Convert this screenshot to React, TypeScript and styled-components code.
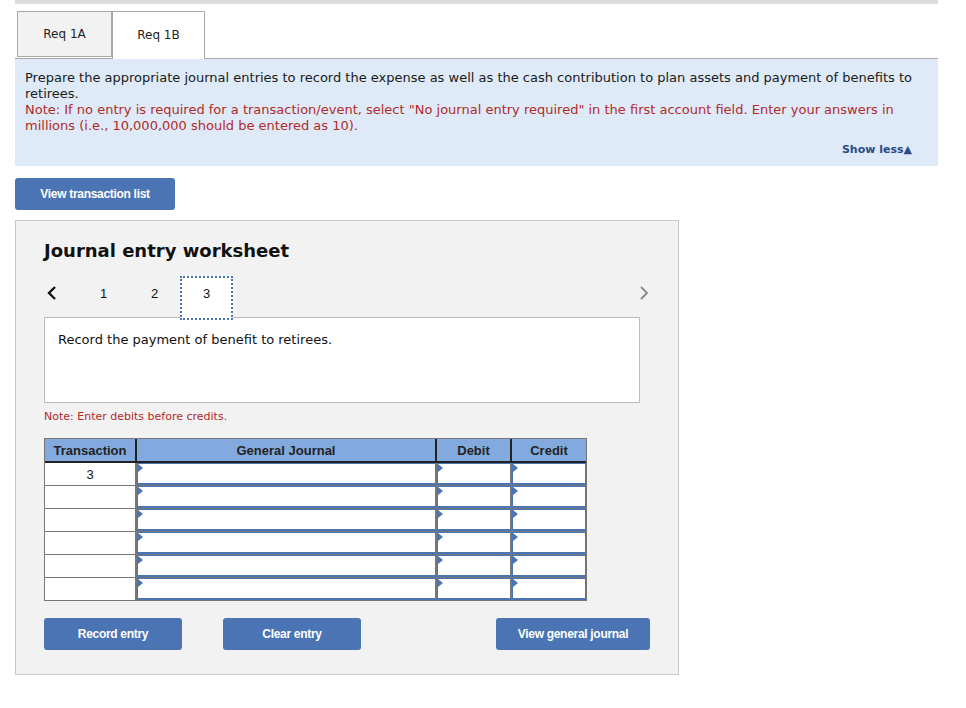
import React from 'react'
import styled, { createGlobalStyle } from 'styled-components'

const GlobalStyle = createGlobalStyle`
  body {
    margin: 0;
    background: #fff;
    font-family: Verdana, "DejaVu Sans", sans-serif;
    color: #111;
  }
`

const Page = styled.div`
  width: 923px;
  padding: 0 0 0 15px;
`

const TopBar = styled.div`
  height: 4px;
  background: #dcdcdc;
`

const Tabs = styled.div`
  display: flex;
  margin-top: 7px;
  padding-left: 2px;
  border-bottom: 1px solid #a8a8a8;
  height: 47px;
`

const Tab = styled.div<{ $active?: boolean }>`
  width: ${(p) => (p.$active ? 93 : 95)}px;
  height: ${(p) => (p.$active ? 48 : 46)}px;
  box-sizing: border-box;
  border: 1px solid #a8a8a8;
  border-bottom: ${(p) => (p.$active ? 'none' : '1px solid #a8a8a8')};
  background: ${(p) => (p.$active ? '#fff' : '#f2f2f2')};
  display: flex;
  align-items: center;
  justify-content: center;
  font-size: 12px;
  color: #222;
  padding-bottom: 1px;
`

const Instructions = styled.div`
  background: #deeaf7;
  padding: 11px 10px 8px 10px;
  font-size: 13px;
  line-height: 16px;
`

const Plain = styled.div`
  color: #1a1a1a;
`

const Note = styled.div`
  color: #b22a2a;
`

const ShowLess = styled.div`
  text-align: right;
  margin-top: 8px;
  padding-right: 16px;
  font-size: 11px;
  font-weight: bold;
  color: #2a4b85;
`

const Button = styled.button<{ $w: number }>`
  width: ${(p) => p.$w}px;
  height: 32px;
  border: none;
  border-radius: 3px;
  background: #4a74b4;
  color: #fff;
  font-family: "Liberation Sans", Arial, sans-serif;
  font-weight: bold;
  font-size: 12px;
  letter-spacing: -0.3px;
  padding: 0;
`

const TopAction = styled.div`
  margin-top: 12px;
`

const Worksheet = styled.div`
  margin-top: 10px;
  width: 664px;
  box-sizing: border-box;
  background: #f2f2f2;
  border: 1px solid #c8c8c8;
  padding: 18px 0 24px 28px;
`

const Title = styled.h2`
  margin: 0;
  font-size: 18px;
  font-weight: bold;
  color: #111;
  line-height: 24px;
`

const Nav = styled.div`
  display: flex;
  align-items: flex-start;
  height: 44px;
  margin-top: 13px;
  width: 608px;
`

const Arrow = styled.div<{ $muted?: boolean }>`
  width: 16px;
  height: 34px;
  display: flex;
  align-items: center;
  justify-content: center;
  color: ${(p) => (p.$muted ? '#888' : '#111')};
`

const Steps = styled.div`
  display: flex;
  margin-left: 18px;
`

const Step = styled.div<{ $current?: boolean }>`
  width: ${(p) => (p.$current ? 53 : 51)}px;
  height: 44px;
  box-sizing: border-box;
  display: flex;
  justify-content: center;
  padding-top: ${(p) => (p.$current ? 8 : 10)}px;
  font-size: 13px;
  font-family: "Liberation Sans", Arial, sans-serif;
  color: #111;
  background: ${(p) => (p.$current ? '#fff' : 'transparent')};
  border: ${(p) => (p.$current ? '2px dotted #4a74b4' : 'none')};
`

const Spacer = styled.div`
  flex: 1;
`

const Prompt = styled.div`
  margin-top: -3px;
  width: 596px;
  height: 86px;
  box-sizing: border-box;
  background: #fff;
  border: 1px solid #bbb;
  padding: 14px 13px;
  font-size: 13px;
  line-height: 16px;
`

const SmallNote = styled.div`
  margin-top: 7px;
  font-size: 11px;
  color: #b22a2a;
`

const Table = styled.div`
  margin-top: 15px;
  width: 543px;
  box-sizing: border-box;
  border: 1px solid #777;
  font-family: "Liberation Sans", Arial, sans-serif;
`

const HeadRow = styled.div`
  display: grid;
  grid-template-columns: 92px 300px 75px 1fr;
  height: 22px;
  background: #82aade;
  border-bottom: 2px solid #222;
`

const HeadCell = styled.div<{ $last?: boolean }>`
  display: flex;
  align-items: center;
  justify-content: center;
  font-size: 13px;
  font-weight: bold;
  color: #222;
  border-right: ${(p) => (p.$last ? 'none' : '2px solid #222')};
`

const Row = styled.div<{ $last?: boolean }>`
  display: grid;
  grid-template-columns: 92px 300px 75px 1fr;
  height: ${(p) => (p.$last ? 22 : 23)}px;
  box-sizing: border-box;
  border-bottom: ${(p) => (p.$last ? 'none' : '1px solid #777')};
`

const TxCell = styled.div`
  background: #fff;
  border-right: 2px solid #777;
  display: flex;
  align-items: center;
  justify-content: center;
  font-size: 13px;
  color: #111;
`

const InputCell = styled.div<{ $last?: boolean }>`
  position: relative;
  background: #fff;
  box-sizing: border-box;
  border-top: 1px solid #4a74b4;
  border-bottom: 2px solid #4a74b4;
  border-left: 1px solid #4a74b4;
  border-right: ${(p) => (p.$last ? '1px solid #4a74b4' : '2px solid #777')};
`

const Marker = styled.span`
  position: absolute;
  left: 0;
  top: 0;
  width: 0;
  height: 0;
  border-top: 4px solid transparent;
  border-bottom: 4px solid transparent;
  border-left: 5px solid #4a74b4;
`

const Actions = styled.div`
  display: flex;
  margin-top: 17px;
  width: 606px;
  gap: 41px;
`

const ActionSpacer = styled.div`
  flex: 1;
`

const ChevronLeft = () => (
  <svg width="12" height="16" viewBox="0 0 12 16">
    <path d="M9 2 L3 8 L9 14" fill="none" stroke="currentColor" strokeWidth="2.4" />
  </svg>
)

const ChevronRight = () => (
  <svg width="12" height="16" viewBox="0 0 12 16">
    <path d="M3 2 L9 8 L3 14" fill="none" stroke="currentColor" strokeWidth="1.8" />
  </svg>
)

const rows = ['3', '', '', '', '', '']

export default function App() {
  return (
    <>
      <GlobalStyle />
      <Page>
        <TopBar />
        <Tabs>
          <Tab>Req 1A</Tab>
          <Tab $active>Req 1B</Tab>
        </Tabs>
        <Instructions>
          <Plain>
            Prepare the appropriate journal entries to record the expense as well as the cash contribution to plan
            assets and payment of benefits to retirees.
          </Plain>
          <Note>
            Note: If no entry is required for a transaction/event, select "No journal entry required" in the first
            account field. Enter your answers in millions (i.e., 10,000,000 should be entered as 10).
          </Note>
          <ShowLess>Show less▲</ShowLess>
        </Instructions>
        <TopAction>
          <Button $w={160}>View transaction list</Button>
        </TopAction>
        <Worksheet>
          <Title>Journal entry worksheet</Title>
          <Nav>
            <Arrow>
              <ChevronLeft />
            </Arrow>
            <Steps>
              <Step>1</Step>
              <Step>2</Step>
              <Step $current>3</Step>
            </Steps>
            <Spacer />
            <Arrow $muted>
              <ChevronRight />
            </Arrow>
          </Nav>
          <Prompt>Record the payment of benefit to retirees.</Prompt>
          <SmallNote>Note: Enter debits before credits.</SmallNote>
          <Table>
            <HeadRow>
              <HeadCell>Transaction</HeadCell>
              <HeadCell>General Journal</HeadCell>
              <HeadCell>Debit</HeadCell>
              <HeadCell $last>Credit</HeadCell>
            </HeadRow>
            {rows.map((tx, i) => (
              <Row key={i} $last={i === rows.length - 1}>
                <TxCell>{tx}</TxCell>
                <InputCell>
                  <Marker />
                </InputCell>
                <InputCell>
                  <Marker />
                </InputCell>
                <InputCell $last>
                  <Marker />
                </InputCell>
              </Row>
            ))}
          </Table>
          <Actions>
            <Button $w={138}>Record entry</Button>
            <Button $w={138}>Clear entry</Button>
            <ActionSpacer />
            <Button $w={154}>View general journal</Button>
          </Actions>
        </Worksheet>
      </Page>
    </>
  )
}
